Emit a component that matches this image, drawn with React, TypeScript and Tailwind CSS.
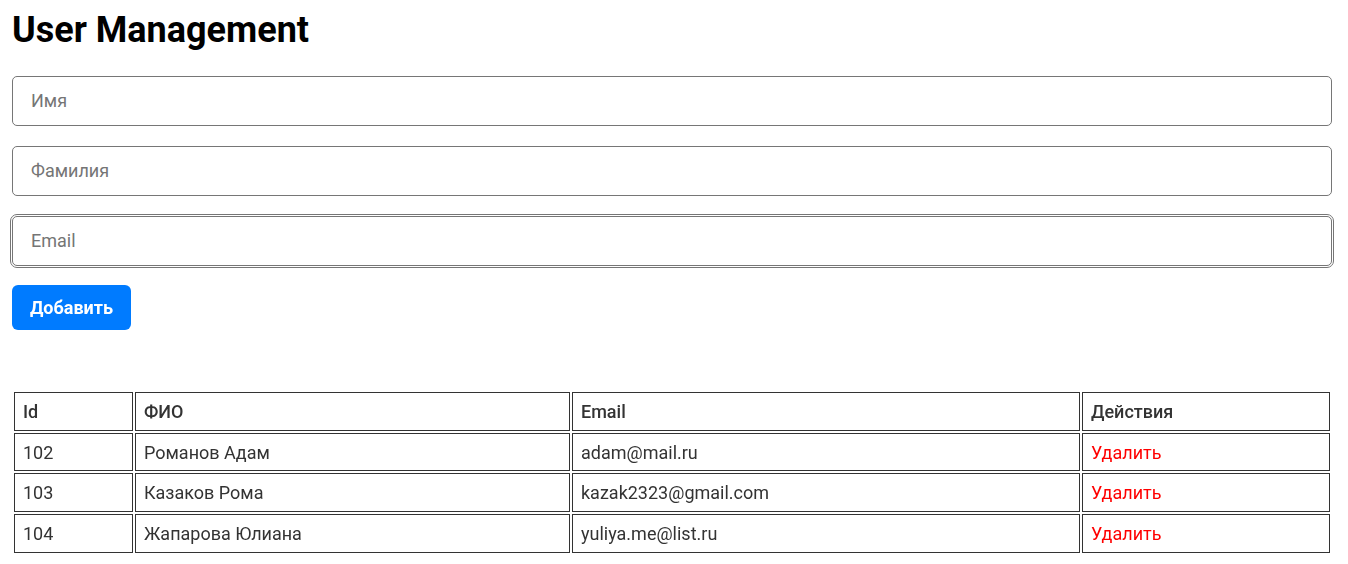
import * as React from "react";

type User = { id: number; name: string; email: string };

const initialUsers: User[] = [
  { id: 102, name: "Романов Адам", email: "adam@mail.ru" },
  { id: 103, name: "Казаков Рома", email: "kazak2323@gmail.com" },
  { id: 104, name: "Жапарова Юлиана", email: "yuliya.me@list.ru" },
];

export default function App() {
  const [users, setUsers] = React.useState<User[]>(initialUsers);
  const [firstName, setFirstName] = React.useState("");
  const [lastName, setLastName] = React.useState("");
  const [email, setEmail] = React.useState("");

  const addUser = () => {
    if (!firstName && !lastName && !email) return;
    const nextId = users.length ? users[users.length - 1].id + 1 : 1;
    setUsers([...users, { id: nextId, name: `${lastName} ${firstName}`.trim(), email }]);
    setFirstName("");
    setLastName("");
    setEmail("");
  };

  const inputClass =
    "w-full h-[50px] rounded-[5px] border border-[#767676] px-[18px] pb-[1px] text-[18px] text-[#333] placeholder:text-[#757575] outline-none";

  return (
    <div className="min-h-screen bg-white pl-3 pr-4 pt-[7px] font-['Roboto',sans-serif]">
      <h1 className="text-[36px] font-bold leading-[46px] text-black">User Management</h1>

      <div className="mt-[23px] flex flex-col gap-5">
        <input
          className={inputClass}
          placeholder="Имя"
          value={firstName}
          onChange={(e) => setFirstName(e.target.value)}
        />
        <input
          className={inputClass}
          placeholder="Фамилия"
          value={lastName}
          onChange={(e) => setLastName(e.target.value)}
        />
        {/* focused field */}
        <input
          className={`${inputClass} outline-1 outline-offset-1 outline-solid outline-[#767676] caret-black`}
          placeholder="Email"
          value={email}
          autoFocus
          onChange={(e) => setEmail(e.target.value)}
        />
      </div>

      <button
        className="mt-[19px] h-[45px] w-[119px] rounded-[6px] bg-[#007bff] text-[18px] font-bold text-white"
        onClick={addUser}
      >
        Добавить
      </button>

      <table className="mt-[60px] w-full table-fixed border-separate border-spacing-[2px] text-[18px] text-[#333]">
        <thead>
          <tr>
            <th className="w-[119px] h-[38.7px] border border-[#333] px-[8px] text-left font-medium">Id</th>
            <th className="w-[435px] border border-[#333] px-[8px] text-left font-medium">ФИО</th>
            <th className="w-[508px] border border-[#333] px-[8px] text-left font-medium">Email</th>
            <th className="border border-[#333] px-[8px] text-left font-medium">Действия</th>
          </tr>
        </thead>
        <tbody>
          {users.map((u) => (
            <tr key={u.id}>
              <td className="h-[38.7px] border border-[#333] px-[8px]">{u.id}</td>
              <td className="border border-[#333] px-[8px]">{u.name}</td>
              <td className="border border-[#333] px-[8px]">{u.email}</td>
              <td className="border border-[#333] px-[8px]">
                <span
                  className="cursor-pointer text-[#ff0000]"
                  onClick={() => setUsers(users.filter((x) => x.id !== u.id))}
                >
                  Удалить
                </span>
              </td>
            </tr>
          ))}
        </tbody>
      </table>
    </div>
  );
}
